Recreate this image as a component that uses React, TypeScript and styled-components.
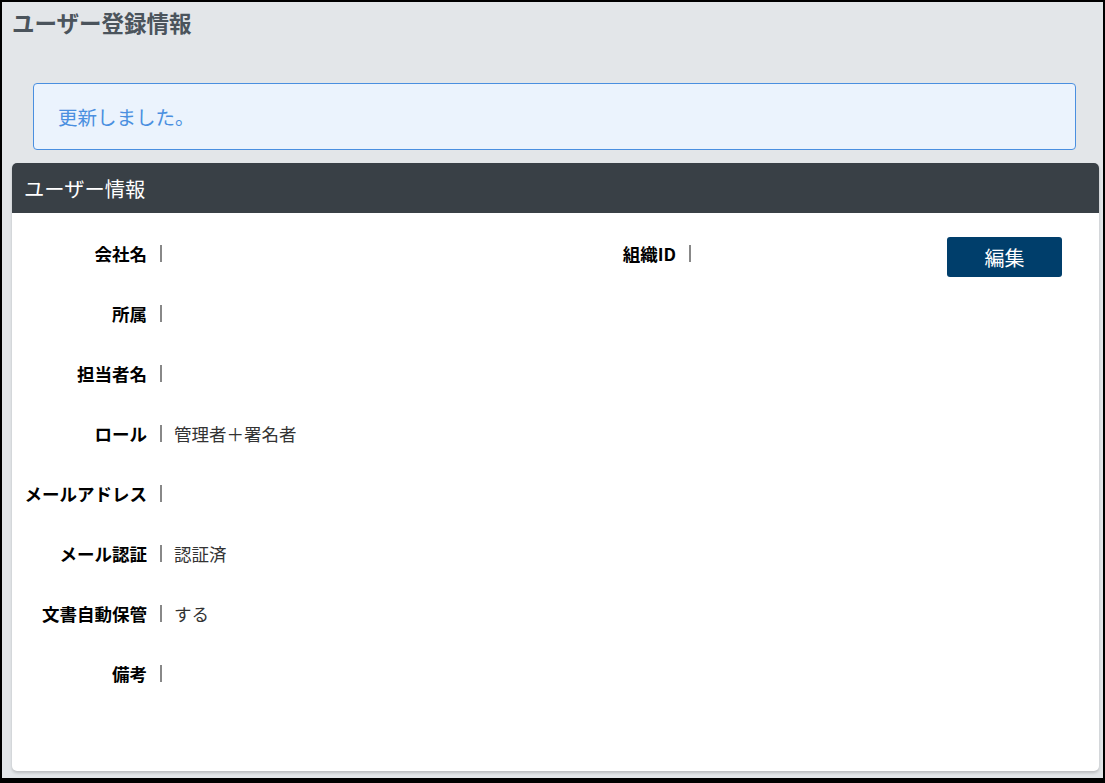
import React from 'react';
import styled, { createGlobalStyle } from 'styled-components';

const GlobalStyle = createGlobalStyle`
  html, body {
    margin: 0;
    padding: 0;
    background: #000;
  }
  body {
    font-family: "Noto Sans CJK JP", "Noto Sans", sans-serif;
  }
  * {
    box-sizing: border-box;
  }
`;

const Page = styled.div`
  width: 1105px;
  height: 783px;
  border: 2px solid #000;
  border-bottom-width: 5px;
  background: #e3e6e9;
  padding: 0 4px 0 10px;
  display: flex;
  flex-direction: column;
`;

const PageTitle = styled.h1`
  margin: 0;
  padding-top: 4px;
  font-size: 22.5px;
  line-height: 32px;
  font-weight: 700;
  color: #4b545c;
`;

const Alert = styled.div`
  margin: 45px 23px 13px 21px;
  height: 67px;
  padding: 0 24px;
  display: flex;
  align-items: center;
  background: #ebf3fd;
  border: 1px solid #4a8fe0;
  border-radius: 4px;
  color: #4a8fe0;
  font-size: 19.5px;
`;

const Card = styled.section`
  height: 608px;
  background: #fff;
  border-radius: 5px;
  box-shadow: 0 2px 3px rgba(0, 0, 0, 0.18);
  display: flex;
  flex-direction: column;
`;

const CardHeader = styled.div`
  height: 50px;
  background: #394046;
  border-radius: 5px 5px 0 0;
  color: #fff;
  font-size: 20.3px;
  padding-left: 12px;
  display: flex;
  align-items: center;
`;

const CardBody = styled.div`
  padding-top: 10px;
  display: flex;
  flex-direction: column;
`;

const Row = styled.div`
  height: 60px;
  display: flex;
  align-items: center;
`;

const Field = styled.div<{ $width?: number }>`
  display: flex;
  align-items: center;
  ${(p) => (p.$width ? `width: ${p.$width}px;` : 'flex: 1;')}
`;

const Label = styled.div`
  width: 135px;
  text-align: right;
  font-size: 17.5px;
  font-weight: 700;
  color: #000;
  white-space: nowrap;
`;

const Divider = styled.span`
  display: inline-block;
  width: 2px;
  height: 17px;
  margin-left: 13px;
  background: #888;
`;

const Value = styled.div`
  margin-left: 12px;
  font-size: 17.5px;
  color: #333;
`;

const EditButton = styled.button`
  align-self: flex-start;
  margin: 14px 37px 0 0;
  width: 115px;
  height: 40px;
  border: none;
  border-radius: 3px;
  background: #003e6b;
  color: #fff;
  font-family: inherit;
  font-size: 20px;
  cursor: pointer;
`;

const fields: { label: string; value?: string }[] = [
  { label: '所属' },
  { label: '担当者名' },
  { label: 'ロール', value: '管理者＋署名者' },
  { label: 'メールアドレス' },
  { label: 'メール認証', value: '認証済' },
  { label: '文書自動保管', value: 'する' },
  { label: '備考' },
];

function InfoField({ label, value, width }: { label: string; value?: string; width?: number }) {
  return (
    <Field $width={width}>
      <Label>{label}</Label>
      <Divider />
      <Value>{value}</Value>
    </Field>
  );
}

export default function App() {
  return (
    <>
      <GlobalStyle />
      <Page>
        <PageTitle>ユーザー登録情報</PageTitle>
        <Alert>更新しました。</Alert>
        <Card>
          <CardHeader>ユーザー情報</CardHeader>
          <CardBody>
            <Row>
              <InfoField label="会社名" width={529} />
              <InfoField label="組織ID" />
              <EditButton>編集</EditButton>
            </Row>
            {fields.map((f) => (
              <Row key={f.label}>
                <InfoField label={f.label} value={f.value} />
              </Row>
            ))}
          </CardBody>
        </Card>
      </Page>
    </>
  );
}
